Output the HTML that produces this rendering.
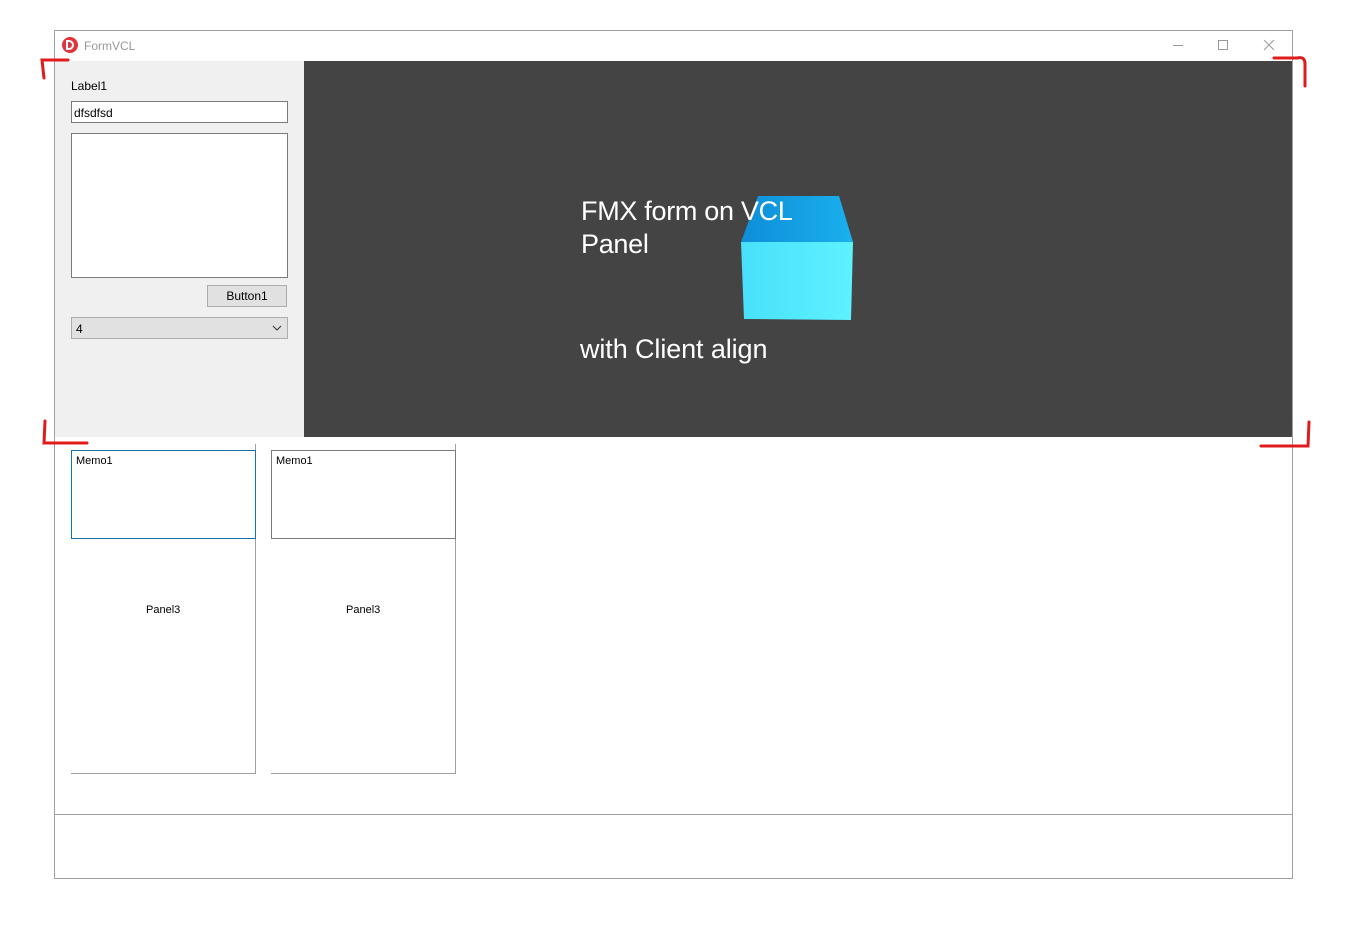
<!DOCTYPE html>
<html><head><meta charset="utf-8"><style>
*{margin:0;padding:0;box-sizing:border-box}
body{width:1356px;height:928px;background:#fff;position:relative;overflow:hidden;font-family:"Liberation Sans",sans-serif;font-size:12px;color:#000}
.a{position:absolute}
</style></head><body>
<div class="a" style="left:54px;top:30px;width:1239px;height:849px;border:1px solid #a0a0a0"></div>
<div class="a" style="left:62px;top:37px;width:16px;height:16px;border-radius:50%;background:#e0333b"></div>
<div class="a" style="left:66px;top:40px;width:8px;height:10px;border:2px solid #fff;border-radius:0 5px 5px 0"></div>
<div class="a" style="left:84px;top:39px;color:#999;font-size:12px">FormVCL</div>
<div class="a" style="left:1173px;top:45px;width:10px;height:1px;background:#999"></div>
<div class="a" style="left:1218px;top:40px;width:10px;height:10px;border:1px solid #999"></div>
<svg class="a" style="left:1263px;top:39px" width="12" height="12"><path d="M1 1L11 11M11 1L1 11" stroke="#999" stroke-width="1"/></svg>
<div class="a" style="left:55px;top:61px;width:249px;height:376px;background:#f0f0f0"></div>
<div class="a" style="left:71px;top:79px">Label1</div>
<div class="a" style="left:71px;top:101px;width:217px;height:22px;border:1px solid #7a7a7a;background:#fff;padding:4px 2px 0">dfsdfsd</div>
<div class="a" style="left:71px;top:133px;width:217px;height:145px;border:1px solid #7a7a7a;background:#fff"></div>
<div class="a" style="left:207px;top:285px;width:80px;height:22px;border:1px solid #adadad;background:#e1e1e1;text-align:center;line-height:21px">Button1</div>
<div class="a" style="left:71px;top:317px;width:217px;height:22px;border:1px solid #adadad;background:#e1e1e1;padding:4px 4px 0">4</div>
<svg class="a" style="left:272px;top:325px" width="10" height="6"><path d="M1 1L5 5L9 1" stroke="#333" fill="none"/></svg>
<div class="a" style="left:304px;top:61px;width:988px;height:376px;background:#444"></div>
<svg class="a" style="left:0;top:0" width="1356" height="928">
<defs>
<linearGradient id="t" x1="0" y1="0" x2="1" y2="0"><stop offset="0" stop-color="#0e8ed8"/><stop offset="1" stop-color="#1ab0ee"/></linearGradient>
<linearGradient id="f" x1="0" y1="0" x2="1" y2="0"><stop offset="0" stop-color="#48e0fb"/><stop offset="1" stop-color="#5ef2ff"/></linearGradient>
</defs>
<polygon points="758,196 839,196 853,242 741,242" fill="url(#t)"/>
<polygon points="741,242 853,242 851,320 744,319" fill="url(#f)"/>
</svg>
<div class="a" style="left:581px;top:195px;color:#fff;font-size:27px;line-height:33px;letter-spacing:-0.3px">FMX form on VCL<br>Panel</div>
<div class="a" style="left:580px;top:333px;color:#fff;font-size:27px;line-height:33px;letter-spacing:-0.1px">with Client align</div>
<div class="a" style="left:255px;top:444px;width:1px;height:330px;background:#a0a0a0"></div>
<div class="a" style="left:455px;top:444px;width:1px;height:330px;background:#a0a0a0"></div>
<div class="a" style="left:71px;top:773px;width:185px;height:1px;background:#a0a0a0"></div>
<div class="a" style="left:271px;top:773px;width:185px;height:1px;background:#a0a0a0"></div>
<div class="a" style="left:71px;top:450px;width:185px;height:89px;border:1px solid #1a6fa8;background:#fff;padding:4px 4px 0;font-size:11px">Memo1</div>
<div class="a" style="left:271px;top:450px;width:185px;height:89px;border:1px solid #7a7a7a;background:#fff;padding:4px 4px 0;font-size:11px">Memo1</div>
<div class="a" style="left:146px;top:604px;font-size:11px">Panel3</div>
<div class="a" style="left:346px;top:604px;font-size:11px">Panel3</div>
<div class="a" style="left:55px;top:814px;width:1237px;height:1px;background:#a0a0a0"></div>
<svg class="a" style="left:0;top:0" width="1356" height="928">
<g stroke="#e01b1b" stroke-width="3" fill="none" stroke-linecap="round">
<path d="M68 60H42L44 78"/>
<path d="M1274 58H1297Q1305 56 1305 64V86"/>
<path d="M45 421L44 443H87"/>
<path d="M1261 446H1308L1309 422"/>
</g></svg>
</body></html>
